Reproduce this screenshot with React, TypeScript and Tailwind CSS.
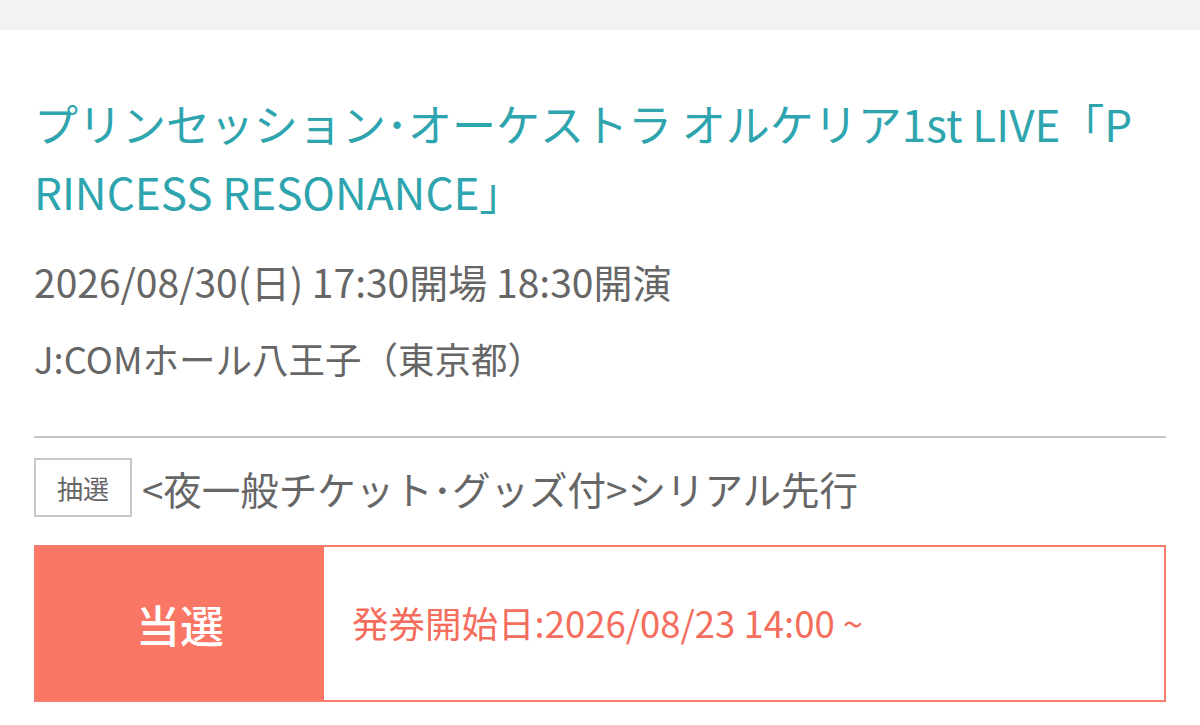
export default function App() {
  return (
    <div className="min-h-screen bg-white font-['Noto_Sans_CJK_JP','Noto_Sans',sans-serif]">
      <div className="h-[30px] bg-[#f2f2f2]" />
      <div className="px-[34px] pt-[59px]">
        <h1 className="mr-[11px] break-all text-[44px] leading-[68px] text-[#2ea5ae]">
          プリンセッション･オーケストラ オルケリア1st LIVE「PRINCESS RESONANCE」
        </h1>
        <p className="mt-[31px] text-[39px] leading-[50px] text-[#666666]">
          2026/08/30(日) 17:30開場 18:30開演
        </p>
        <p className="mt-[28px] text-[36.5px] leading-[50px] text-[#666666]">
          J:COMホール八王子（東京都）
        </p>
        <div className="mt-[52px] border-t-2 border-[#c4c4c4]" />
        <div className="mt-[20px] flex items-center gap-[10px]">
          <span className="flex h-[59px] w-[98px] shrink-0 items-center justify-center border-2 border-[#c8c8c8] text-[26px] text-[#666666]">
            抽選
          </span>
          <span className="text-[38.5px] leading-[50px] text-[#666666]">
            &lt;夜一般チケット･グッズ付&gt;シリアル先行
          </span>
        </div>
        <div className="mt-[28px] flex h-[157px] border-2 border-[#f47a6a]">
          <div className="flex w-[288px] items-center justify-center bg-[#fa7665] text-[44px] font-medium text-white">
            当選
          </div>
          <div className="flex items-center pl-[28px] text-[36.5px] text-[#f56d5c]">
            発券開始日:2026/08/23 14:00 ~
          </div>
        </div>
      </div>
    </div>
  );
}
